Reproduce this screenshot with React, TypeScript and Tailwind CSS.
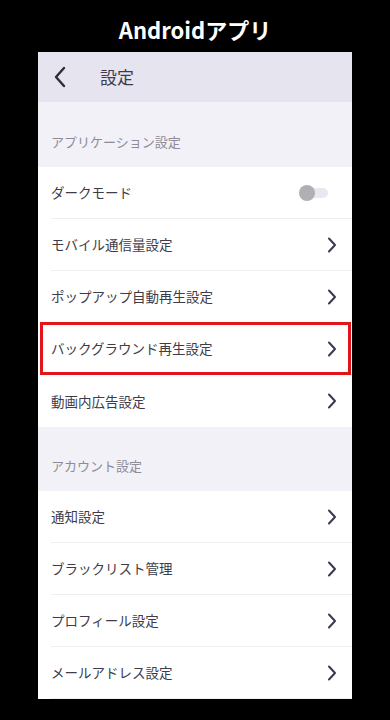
const font = { fontFamily: '"Noto Sans CJK JP", "Noto Sans", sans-serif' }

function Chevron() {
  return (
    <svg width="10" height="16" viewBox="0 0 10 16" fill="none" className="shrink-0">
      <path d="M2 1.5 L8 8 L2 14.5" stroke="#3b3950" strokeWidth="2" strokeLinecap="round" strokeLinejoin="round" />
    </svg>
  )
}

function Row({ label, highlight, toggle, last }: { label: string; highlight?: boolean; toggle?: boolean; last?: boolean }) {
  return (
    <div className="relative h-[52px] bg-white pl-[13px]">
      <div
        className={`flex h-full items-center justify-between ${toggle ? 'pr-[24px]' : 'pr-[15px]'} ${last ? '' : 'border-b border-[#eeedf2]'}`}
      >
        <span className="text-[13.5px] text-[#3e3c48]">{label}</span>
        {toggle ? (
          <div className="relative h-[16px] w-[29px]">
            <div className="absolute right-0 top-[3px] h-[10px] w-[24px] rounded-full bg-[#e9e8f0]" />
            <div className="absolute left-0 top-0 h-[16px] w-[16px] rounded-full bg-[#b0afb4]" />
          </div>
        ) : (
          <Chevron />
        )}
      </div>
      {highlight && <div className="absolute -top-[1px] bottom-0 left-[2px] right-[1px] border-[3px] border-[#e4141b]" />}
    </div>
  )
}

function Section({ label, tall }: { label: string; tall?: boolean }) {
  return (
    <div className={`flex ${tall ? 'h-[65px]' : 'h-[64px]'} items-center bg-[#f2f1f7] pl-[13px] pt-[14px]`}>
      <span className="text-[13px] text-[#8d8b98]">{label}</span>
    </div>
  )
}

export default function App() {
  return (
    <div className="flex h-[720px] w-[390px] flex-col items-center bg-black" style={font}>
      <div className="flex h-[52px] items-center justify-center pt-[6px] text-[22px] font-bold text-white">Androidアプリ</div>
      <div className="w-[314px] bg-white">
        <div className="flex h-[50px] items-center bg-[#e6e5ef] pl-[15px]">
          <svg width="14" height="22" viewBox="0 0 14 22" fill="none">
            <path d="M11 2 L3 11 L11 20" stroke="#2e2c3a" strokeWidth="2.4" strokeLinecap="round" strokeLinejoin="round" />
          </svg>
          <span className="ml-[33px] text-[17px] text-[#3d3a4d]">設定</span>
        </div>
        <Section label="アプリケーション設定" tall />
        <Row label="ダークモード" toggle />
        <Row label="モバイル通信量設定" />
        <Row label="ポップアップ自動再生設定" />
        <Row label="バックグラウンド再生設定" highlight />
        <Row label="動画内広告設定" last />
        <Section label="アカウント設定" />
        <Row label="通知設定" />
        <Row label="ブラックリスト管理" />
        <Row label="プロフィール設定" />
        <Row label="メールアドレス設定" />
      </div>
    </div>
  )
}
